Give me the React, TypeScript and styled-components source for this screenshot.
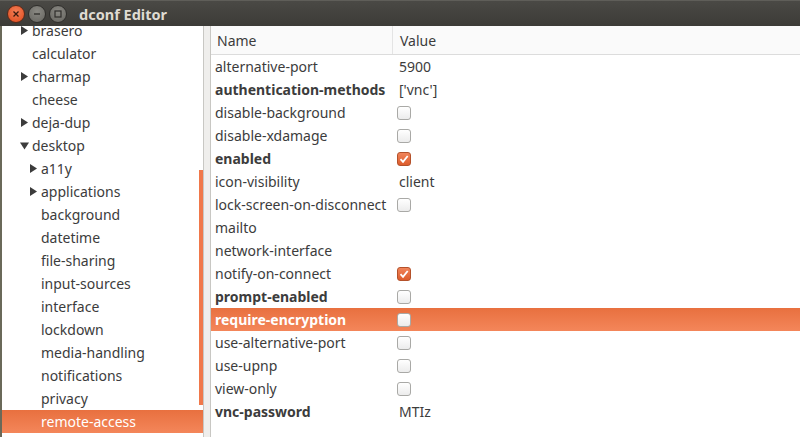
import React, { FC } from 'react';
import styled, { createGlobalStyle } from 'styled-components';

const GlobalStyle = createGlobalStyle`
  html, body {
    margin: 0;
    padding: 0;
    background: #3c3b37;
  }
  body {
    font-family: 'Noto Sans', 'DejaVu Sans', sans-serif;
    font-size: 14px;
    color: #3c3c3c;
  }
`;

const Window = styled.div`
  width: 800px;
  height: 437px;
  display: flex;
  flex-direction: column;
  overflow: hidden;
`;

const TitleBar = styled.div`
  height: 26px;
  flex: none;
  display: flex;
  align-items: center;
  padding-left: 7px;
  gap: 2px;
  background: linear-gradient(#4a4945, #3c3b37);
  border-top: 1px solid #5f5e59;
  box-sizing: border-box;
`;

const WinButton = styled.div<{ $close?: boolean }>`
  width: 18px;
  height: 18px;
  border-radius: 50%;
  display: flex;
  align-items: center;
  justify-content: center;
  background: ${(p) =>
    p.$close
      ? 'radial-gradient(circle at 50% 35%, #f37e56, #df4a1c)'
      : 'radial-gradient(circle at 50% 35%, #8a8983, #65645f)'};
  border: 1px solid ${(p) => (p.$close ? '#5a2a1a' : '#2f2e2b')};
  box-sizing: border-box;
  margin-right: 1px;
`;

const Title = styled.div`
  margin-left: 9px;
  font-family: 'Noto Sans', sans-serif;
  font-weight: bold;
  font-size: 14.5px;
  color: #dfdbd2;
`;

const Body = styled.div`
  flex: 1;
  display: flex;
  min-height: 0;
  background: #ffffff;
`;

const TreePane = styled.div`
  position: relative;
  width: 201px;
  flex: none;
  border-left: 2px solid #6a6959;
  overflow: hidden;
  background: #ffffff;
`;

const TreeList = styled.div`
  margin-top: -7px;
  display: flex;
  flex-direction: column;
`;

const TreeRow = styled.div<{ $level: number; $selected?: boolean }>`
  height: 23px;
  flex: none;
  display: flex;
  align-items: center;
  padding-left: ${(p) => 18 + p.$level * 9}px;
  color: ${(p) => (p.$selected ? '#ffffff' : '#3c3c3c')};
  background: ${(p) => (p.$selected ? 'linear-gradient(#e8703f, #f4865a)' : 'transparent')};
  white-space: nowrap;
`;

const Expander = styled.span`
  width: 12px;
  display: inline-flex;
  align-items: center;
  justify-content: flex-start;
`;

const ScrollThumb = styled.div`
  position: absolute;
  right: 0;
  top: 144px;
  width: 4px;
  height: 235px;
  background: #f0784a;
`;

const Separator = styled.div`
  width: 6px;
  flex: none;
  background: #efeeec;
  border-left: 1px solid #c8c7c3;
  border-right: 1px solid #c8c7c3;
`;

const TablePane = styled.div`
  flex: 1;
  display: flex;
  flex-direction: column;
  min-width: 0;
`;

const Header = styled.div`
  height: 29px;
  flex: none;
  display: grid;
  grid-template-columns: 181px 1fr;
  background: #fafafa;
  border-bottom: 1px solid #dcdcdc;
  box-sizing: border-box;
`;

const HeaderCell = styled.div<{ $sep?: boolean }>`
  display: flex;
  align-items: center;
  padding-left: ${(p) => (p.$sep ? '7px' : '6px')};
  border-left: ${(p) => (p.$sep ? '1px solid #e4e4e4' : 'none')};
  color: #3c3c3c;
`;

const Row = styled.div<{ $selected?: boolean }>`
  height: 23px;
  flex: none;
  display: grid;
  grid-template-columns: 181px 1fr;
  align-items: center;
  background: ${(p) => (p.$selected ? 'linear-gradient(#e8703f, #f4865a)' : 'transparent')};
  color: ${(p) => (p.$selected ? '#ffffff' : '#3c3c3c')};
`;

const NameCell = styled.div<{ $bold?: boolean }>`
  padding-left: 4px;
  font-weight: ${(p) => (p.$bold ? 'bold' : 'normal')};
  white-space: nowrap;
`;

const ValueCell = styled.div`
  padding-left: 7px;
  display: flex;
  align-items: center;
`;

const CheckBox = styled.div<{ $checked?: boolean }>`
  width: 14px;
  height: 14px;
  box-sizing: border-box;
  margin-left: -2px;
  border-radius: 3px;
  display: flex;
  align-items: center;
  justify-content: center;
  border: 1px solid ${(p) => (p.$checked ? '#b4512a' : '#a9a9a6')};
  background: ${(p) =>
    p.$checked ? 'linear-gradient(#f0845a, #dd5c2c)' : 'linear-gradient(#ffffff, #ececec)'};
`;

type TreeItem = { label: string; level: number; arrow?: 'right' | 'down'; selected?: boolean };

const treeItems: TreeItem[] = [
  { label: 'brasero', level: 0, arrow: 'right' },
  { label: 'calculator', level: 0 },
  { label: 'charmap', level: 0, arrow: 'right' },
  { label: 'cheese', level: 0 },
  { label: 'deja-dup', level: 0, arrow: 'right' },
  { label: 'desktop', level: 0, arrow: 'down' },
  { label: 'a11y', level: 1, arrow: 'right' },
  { label: 'applications', level: 1, arrow: 'right' },
  { label: 'background', level: 1 },
  { label: 'datetime', level: 1 },
  { label: 'file-sharing', level: 1 },
  { label: 'input-sources', level: 1 },
  { label: 'interface', level: 1 },
  { label: 'lockdown', level: 1 },
  { label: 'media-handling', level: 1 },
  { label: 'notifications', level: 1 },
  { label: 'privacy', level: 1 },
  { label: 'remote-access', level: 1, selected: true },
];

type Key = {
  name: string;
  bold?: boolean;
  text?: string;
  check?: boolean;
  selected?: boolean;
};

const keys: Key[] = [
  { name: 'alternative-port', text: '5900' },
  { name: 'authentication-methods', bold: true, text: "['vnc']" },
  { name: 'disable-background', check: false },
  { name: 'disable-xdamage', check: false },
  { name: 'enabled', bold: true, check: true },
  { name: 'icon-visibility', text: 'client' },
  { name: 'lock-screen-on-disconnect', check: false },
  { name: 'mailto' },
  { name: 'network-interface' },
  { name: 'notify-on-connect', check: true },
  { name: 'prompt-enabled', bold: true, check: false },
  { name: 'require-encryption', bold: true, check: false, selected: true },
  { name: 'use-alternative-port', check: false },
  { name: 'use-upnp', check: false },
  { name: 'view-only', check: false },
  { name: 'vnc-password', bold: true, text: 'MTIz' },
];

const Arrow: FC<{ dir: 'right' | 'down' }> = ({ dir }) => (
  <svg width="9" height="9" viewBox="0 0 9 9">
    {dir === 'right' ? (
      <polygon points="1,0 8,4.5 1,9" fill="#3c3c3c" />
    ) : (
      <polygon points="0,1.5 9,1.5 4.5,8.5" fill="#3c3c3c" />
    )}
  </svg>
);

const Check: FC = () => (
  <svg width="10" height="10" viewBox="0 0 10 10">
    <path d="M1.5 5.2 L4 7.8 L8.7 2" stroke="#ffffff" strokeWidth="1.8" fill="none" />
  </svg>
);

const App: FC = () => {
  return (
    <Window>
      <GlobalStyle />
      <TitleBar>
        <WinButton $close>
          <svg width="8" height="8" viewBox="0 0 8 8">
            <path d="M1.5 1.5 L6.5 6.5 M6.5 1.5 L1.5 6.5" stroke="#3a1a0e" strokeWidth="1.3" />
          </svg>
        </WinButton>
        <WinButton>
          <svg width="8" height="8" viewBox="0 0 8 8">
            <path d="M1 4 H7" stroke="#2f2e2b" strokeWidth="1.3" />
          </svg>
        </WinButton>
        <WinButton>
          <svg width="8" height="8" viewBox="0 0 8 8">
            <rect x="1" y="1" width="6" height="6" stroke="#2f2e2b" strokeWidth="1.2" fill="none" />
          </svg>
        </WinButton>
        <Title>dconf Editor</Title>
      </TitleBar>
      <Body>
        <TreePane>
          <TreeList>
            {treeItems.map((item) => (
              <TreeRow key={item.label} $level={item.level} $selected={item.selected}>
                <Expander>{item.arrow && <Arrow dir={item.arrow} />}</Expander>
                {item.label}
              </TreeRow>
            ))}
          </TreeList>
          <ScrollThumb />
        </TreePane>
        <Separator />
        <TablePane>
          <Header>
            <HeaderCell>Name</HeaderCell>
            <HeaderCell $sep>Value</HeaderCell>
          </Header>
          {keys.map((k) => (
            <Row key={k.name} $selected={k.selected}>
              <NameCell $bold={k.bold}>{k.name}</NameCell>
              <ValueCell>
                {k.text}
                {k.check !== undefined && (
                  <CheckBox $checked={k.check}>{k.check && <Check />}</CheckBox>
                )}
              </ValueCell>
            </Row>
          ))}
        </TablePane>
      </Body>
    </Window>
  );
};

export default App;
